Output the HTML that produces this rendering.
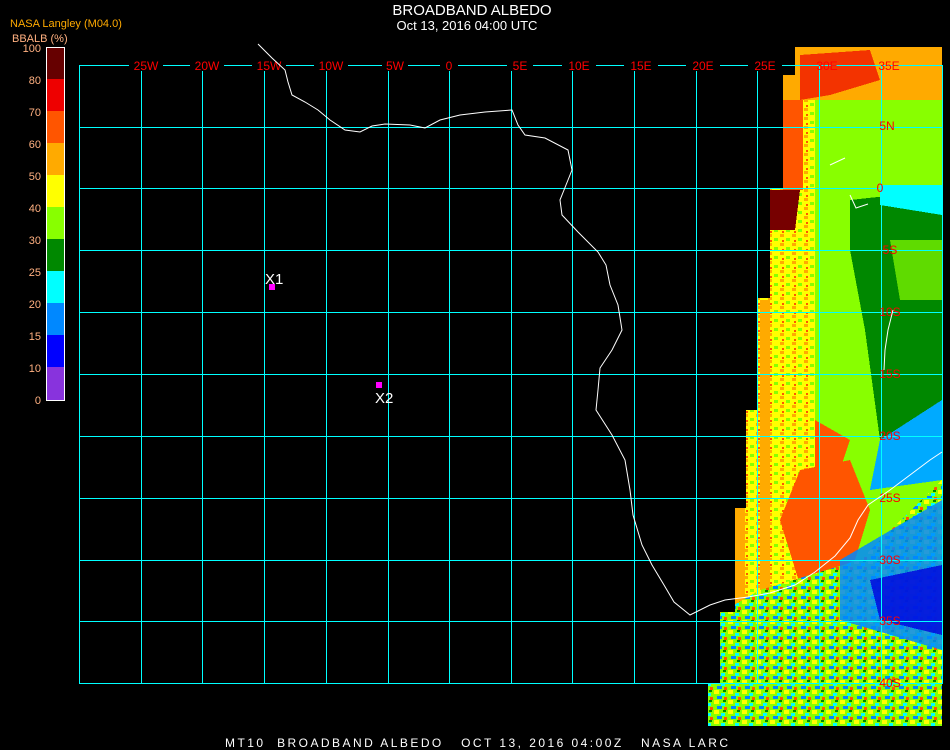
<!DOCTYPE html>
<html><head><meta charset="utf-8"><style>
html,body{margin:0;padding:0;background:#000;width:950px;height:750px;overflow:hidden}
svg{display:block}
text{font-family:"Liberation Sans",sans-serif}
</style></head><body>
<svg width="950" height="750" viewBox="0 0 950 750" xmlns="http://www.w3.org/2000/svg" shape-rendering="crispEdges">
<defs>
<pattern id="noise" width="14" height="10" patternUnits="userSpaceOnUse">
<rect width="14" height="10" fill="#88ff00"/>
<rect x="0" y="0" width="5" height="4" fill="#ffff00"/>
<rect x="7" y="3" width="4" height="3" fill="#00ffff"/>
<rect x="3" y="6" width="5" height="3" fill="#0088ff"/>
<rect x="10" y="7" width="3" height="3" fill="#ff5500"/>
<rect x="9" y="0" width="3" height="2" fill="#008800"/>
</pattern>
<pattern id="noise2" width="12" height="9" patternUnits="userSpaceOnUse">
<rect width="12" height="9" fill="#ffff00"/>
<rect x="0" y="0" width="4" height="3" fill="#ffaa00"/>
<rect x="6" y="4" width="4" height="3" fill="#88ff00"/>
<rect x="2" y="6" width="2" height="2" fill="#ff5500"/>
</pattern>
<clipPath id="dc"><polygon points="795,47 942,47 942,726 708,726 708,683 720,683 720,612 735,612 735,508 746,508 746,410 758,410 758,298 770,298 770,188 783,188 783,75 795,75"/></clipPath>
</defs>
<text x="472" y="15" fill="#fff" font-size="15" text-anchor="middle">BROADBAND ALBEDO</text>
<text x="467" y="30" fill="#fff" font-size="13" text-anchor="middle">Oct 13, 2016 04:00 UTC</text>
<text x="10" y="27" fill="#ffaa00" font-size="11">NASA Langley (M04.0)</text>
<text x="12" y="42" fill="#ffb080" font-size="11">BBALB (%)</text>
<g>
<rect x="46" y="47" width="18" height="32" fill="#660000"/>
<rect x="46" y="79" width="18" height="32" fill="#ee0000"/>
<rect x="46" y="111" width="18" height="32" fill="#ff5500"/>
<rect x="46" y="143" width="18" height="32" fill="#ffaa00"/>
<rect x="46" y="175" width="18" height="32" fill="#ffff00"/>
<rect x="46" y="207" width="18" height="32" fill="#88ff00"/>
<rect x="46" y="239" width="18" height="32" fill="#008800"/>
<rect x="46" y="271" width="18" height="32" fill="#00ffff"/>
<rect x="46" y="303" width="18" height="32" fill="#0088ff"/>
<rect x="46" y="335" width="18" height="32" fill="#0000ff"/>
<rect x="46" y="367" width="18" height="33" fill="#8833dd"/>
<rect x="46.5" y="47.5" width="18" height="353" fill="none" stroke="#fff" stroke-width="1"/>
</g>
<g fill="#ffb080" font-size="11" text-anchor="end">
<text x="41" y="52">100</text><text x="41" y="84">80</text><text x="41" y="116">70</text><text x="41" y="148">60</text><text x="41" y="180">50</text><text x="41" y="212">40</text><text x="41" y="244">30</text><text x="41" y="276">25</text><text x="41" y="308">20</text><text x="41" y="340">15</text><text x="41" y="372">10</text><text x="41" y="404">0</text>
</g>
<!-- data -->
<g clip-path="url(#dc)">
<rect x="700" y="40" width="250" height="700" fill="#88ff00"/>
<rect x="700" y="40" width="115" height="600" fill="url(#noise2)"/>
<rect x="700" y="40" width="45" height="600" fill="#ffaa00"/>
<rect x="760" y="300" width="10" height="300" fill="#ffaa00"/>
<rect x="783" y="60" width="20" height="130" fill="#ff5500"/>
<polygon points="780,40 950,40 950,100 780,100" fill="#ffaa00"/>
<polygon points="800,55 870,50 880,80 830,95 800,100" fill="#ee0000" opacity="0.7"/>
<polygon points="770,190 800,190 795,230 770,230" fill="#770000"/>
<polygon points="850,200 942,190 942,400 880,440 865,330 850,250" fill="#008800"/>
<polygon points="880,185 942,185 942,215 880,205" fill="#00ffff"/>
<polygon points="890,240 942,240 942,300 900,300" fill="#88ff00" opacity="0.7"/>
<polygon points="880,440 942,400 942,480 870,490" fill="#00aaff"/>
<polygon points="800,470 850,460 870,510 855,560 800,585 780,520" fill="#ff5500"/>
<polygon points="815,420 850,440 840,470 815,470" fill="#ff5500"/>
<polygon points="708,620 760,590 860,560 942,480 942,726 708,726" fill="url(#noise)"/>
<polygon points="840,560 942,500 942,650 840,620" fill="#0088ff" opacity="0.85"/>
<polygon points="870,580 942,565 942,635 880,620" fill="#0000dd" opacity="0.8"/>
</g>
<!-- grid -->
<g fill="#00ffff">
<rect x="79" y="65" width="1" height="619"/>
<rect x="141" y="65" width="1" height="619"/><rect x="202" y="65" width="1" height="619"/><rect x="264" y="65" width="1" height="619"/><rect x="326" y="65" width="1" height="619"/><rect x="388" y="65" width="1" height="619"/><rect x="449" y="65" width="1" height="619"/><rect x="511" y="65" width="1" height="619"/><rect x="572" y="65" width="1" height="619"/><rect x="634" y="65" width="1" height="619"/><rect x="696" y="65" width="1" height="619"/><rect x="757" y="65" width="1" height="619"/><rect x="819" y="65" width="1" height="619"/><rect x="881" y="65" width="1" height="619"/><rect x="942" y="65" width="1" height="619"/>
<rect x="79" y="65" width="864" height="1"/>
<rect x="79" y="127" width="864" height="1"/><rect x="79" y="188" width="864" height="1"/><rect x="79" y="250" width="864" height="1"/><rect x="79" y="312" width="864" height="1"/><rect x="79" y="374" width="864" height="1"/><rect x="79" y="436" width="864" height="1"/><rect x="79" y="498" width="864" height="1"/><rect x="79" y="560" width="864" height="1"/><rect x="79" y="621" width="864" height="1"/><rect x="79" y="683" width="864" height="1"/>
</g>
<g fill="#000">
<rect x="129" y="60" width="34" height="11"/><rect x="190" y="60" width="34" height="11"/><rect x="252" y="60" width="34" height="11"/><rect x="314" y="60" width="34" height="11"/><rect x="382" y="60" width="26" height="11"/><rect x="440" y="60" width="18" height="11"/><rect x="507" y="60" width="26" height="11"/><rect x="562" y="60" width="34" height="11"/><rect x="624" y="60" width="34" height="11"/><rect x="686" y="60" width="34" height="11"/><rect x="748" y="60" width="34" height="11"/>
</g>
<g fill="#ff0000" font-size="12" text-anchor="middle" font-family="Liberation Mono">
<text x="146" y="70">25W</text><text x="207" y="70">20W</text><text x="269" y="70">15W</text><text x="331" y="70">10W</text><text x="395" y="70">5W</text><text x="449" y="70">0</text><text x="520" y="70">5E</text><text x="579" y="70">10E</text><text x="641" y="70">15E</text><text x="703" y="70">20E</text><text x="765" y="70">25E</text><text x="827" y="70">30E</text><text x="889" y="70">35E</text>
<text x="887" y="130">5N</text><text x="880" y="192">0</text><text x="890" y="254">5S</text><text x="890" y="316">10S</text><text x="890" y="378">15S</text><text x="890" y="440">20S</text><text x="890" y="502">25S</text><text x="890" y="564">30S</text><text x="890" y="625">35S</text><text x="890" y="687">40S</text>
</g>
<!-- coastline -->
<g shape-rendering="auto">
<polyline fill="none" stroke="#fff" stroke-width="1" points="258,44 266,52 272,58 285,70 288,82 292,95 305,102 318,110 330,120 345,130 360,132 372,126 385,124 410,125 425,128 440,120 460,115 485,112 512,110 518,125 525,135 545,138 568,150 572,170 566,185 560,200 562,215 578,232 598,252 606,265 610,285 618,305 622,330 612,350 600,368 598,390 596,410 612,435 625,460 630,490 633,515 642,545 652,565 664,585 674,602 690,615 710,605 725,600 748,597 770,593 795,585 815,572 835,556 850,538 858,520 868,505 890,490 910,475 930,460 942,452"/>
<polyline fill="none" stroke="#fff" stroke-width="1" points="893,310 888,330 885,350 884,370"/>
<polyline fill="none" stroke="#fff" stroke-width="1" points="850,195 856,208 868,204"/>
<polyline fill="none" stroke="#fff" stroke-width="1" points="830,165 845,158"/>
</g>
<!-- markers -->
<rect x="269" y="284" width="6" height="6" fill="#ff00ff"/>
<text x="265" y="284" fill="#fff" font-size="15">X1</text>
<rect x="376" y="382" width="6" height="6" fill="#ff00ff"/>
<text x="375" y="403" fill="#fff" font-size="15">X2</text>
<text x="225" y="747" fill="#fff" font-size="12" font-family="Liberation Mono" textLength="503" lengthAdjust="spacing" xml:space="preserve">MT10  BROADBAND ALBEDO   OCT 13, 2016 04:00Z   NASA LARC</text>
</svg>
</body></html>
